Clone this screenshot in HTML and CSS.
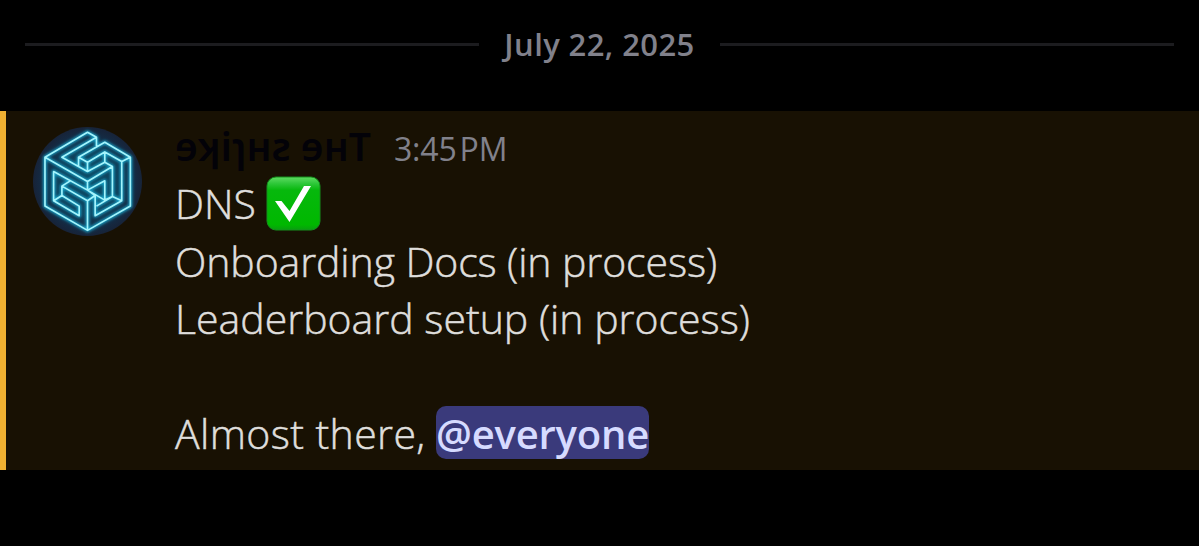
FILE: index.html
```
<!DOCTYPE html>
<html lang="en">
<head>
  <meta charset="UTF-8" />
  <meta name="viewport" content="width=device-width, initial-scale=1.0" />
  <title>Announcements</title>
  <link rel="stylesheet" href="styles.css">
</head>
<body>
  <div class="divider"><span>July 22, 2025</span></div>

  <div class="message">
    <svg class="avatar" viewBox="26 26 328 328">
      <defs>
        <radialGradient id="disc">
          <stop offset="0" stop-color="#0c4760" />
          <stop offset="0.6" stop-color="#103f59" />
          <stop offset="0.85" stop-color="#142b44" />
          <stop offset="1" stop-color="#172338" />
        </radialGradient>
        <filter id="glow" x="-10%" y="-10%" width="120%" height="120%">
          <feGaussianBlur stdDeviation="5" />
        </filter>
        <path id="cube" d="M217 87V57L190 42L62 117V264L190 337L319 264V117L242 72L163 117V147
          M217 57L113 117L190 160L242 132V101
          M62 117L190 190L265 145L242 132
          M163 117L190 132V160M190 132L242 101L293 130L319 117
          M293 130V248L213 293V232L190 216V190
          M293 248L265 235V145M265 235L217 264
          M265 235L242 246V188L190 216L88 160V248L165 293V264L113 232L88 248
          M190 216L242 246M113 232V204L190 248L213 232M190 248V337M113 204L138 188" />
      </defs>
      <circle cx="190" cy="190" r="164" fill="url(#disc)" />
      <use href="#cube" class="cube-glow" filter="url(#glow)" />
      <use href="#cube" class="cube-line" />
    </svg>

    <div class="body">
      <div class="header">
        <span class="name">ɘʞiɿʜƨ ɘʜT</span>
        <span class="time">3:45 PM</span>
      </div>
      <div class="line"><span class="dns">DNS</span>
        <svg class="check" viewBox="0 0 55 55">
          <defs>
            <linearGradient id="green" x1="0" y1="0" x2="0" y2="1">
              <stop offset="0" stop-color="#5fdc62" />
              <stop offset="0.12" stop-color="#2fc83a" />
              <stop offset="0.25" stop-color="#06b80c" />
              <stop offset="0.9" stop-color="#00b800" />
              <stop offset="1" stop-color="#0a9d10" />
            </linearGradient>
          </defs>
          <rect x="1" y="1" width="53" height="53" rx="9" fill="url(#green)" stroke="#14901c" />
          <path d="M9 25h6.500l8 10L38 10h7L23.500 46z" fill="#fff" />
        </svg>
      </div>
      <div class="line docs">Onboarding Docs (in process)</div>
      <div class="line">Leaderboard setup (in process)</div>
      <div class="line"></div>
      <div class="line"><span class="almost">Almost there,</span> <span class="mention">@everyone</span></div>
    </div>
  </div>
</body>
</html>
```
FILE: styles.css
```
body {
  margin: 0;
  background: #000;
  color: #dfdedc;
  font-family: "Open Sans", "Noto Sans", sans-serif;
}
.divider {
  display: flex;
  align-items: center;
  gap: 25px;
  height: 89px;
  margin: 0 25px 22px;
  color: #81818b;
  font-size: 31px;
  font-weight: 600;
  letter-spacing: 0.4px;
  white-space: nowrap;
}
.divider span {
  margin-top: -2px;
}
.divider::before,
.divider::after {
  content: "";
  flex: 1;
  height: 3px;
  background: #1c1c1f;
}
.message {
  display: flex;
  box-sizing: border-box;
  height: 359px;
  padding: 16px 0 0 27px;
  border-left: 6px solid #f0b132;
  background: #181103;
}
.avatar {
  flex: none;
  width: 109px;
  height: 109px;
  margin-right: 33px;
}
.cube-glow,
.cube-line {
  fill: none;
  stroke-linejoin: round;
}
.cube-glow {
  stroke: #13a4ca;
  stroke-width: 11;
}
.cube-line {
  stroke: #a4f4fc;
  stroke-width: 5;
}
.header {
  display: flex;
  align-items: center;
  height: 42px;
  padding-bottom: 6px;
  white-space: nowrap;
}
.name {
  width: 219px;
  margin-top: -5px;
  color: #030208;
  font-family: "Noto Sans", sans-serif;
  font-size: 39px;
  font-weight: 600;
}
.time {
  color: #81818b;
  font-size: 32px;
  letter-spacing: -0.2px;
  word-spacing: -5px;
}
.line {
  display: flex;
  align-items: center;
  height: 57.300px;
  font-size: 41px;
  font-weight: 300;
  white-space: nowrap;
  -webkit-text-stroke: 0.5px;
}
.dns {
  width: 91px;
  margin-top: -2px;
}
.docs {
  letter-spacing: -0.1px;
}
.check {
  width: 55px;
  height: 55px;
}
.almost {
  width: 261px;
  letter-spacing: 0.4px;
}
.mention {
  height: 53px;
  line-height: 55px;
  border-radius: 10px;
  background: #3a3a7b;
  color: #d6dbff;
  font-size: 40px;
  font-weight: 600;
  letter-spacing: -0.2px;
  -webkit-text-stroke: 0;
}
```
